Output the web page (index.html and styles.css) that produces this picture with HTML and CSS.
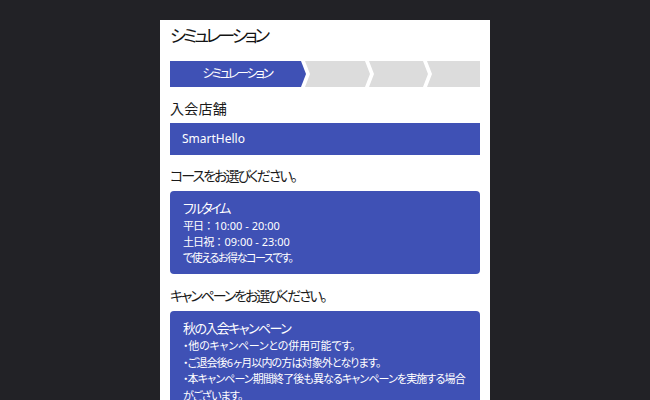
FILE: index.html
```html
<!DOCTYPE html>
<html lang="ja">
<head>
<meta charset="utf-8">
<title>シミュレーション</title>
<link rel="stylesheet" href="styles.css">
</head>
<body>
<main class="panel">
  <h1 class="title">シミュレーション</h1>
  <ol class="steps">
    <li class="step step-first">シミュレーション</li>
    <li class="step step-2"></li>
    <li class="step step-3"></li>
    <li class="step step-last"></li>
  </ol>

  <h2 class="label label-store">入会店舗</h2>
  <div class="store">SmartHello</div>

  <h2 class="label">コースをお選びください。</h2>
  <div class="card">
    <div class="card-title card-title-kana">フルタイム</div>
    <div class="card-line">平日<span class="sep">：</span><span class="time">10:00 - 20:00</span></div>
    <div class="card-line">土日祝<span class="sep">：</span><span class="time">09:00 - 23:00</span></div>
    <div class="card-line card-line-tight">で使えるお得なコースです。</div>
  </div>

  <h2 class="label label-wide">キャンペーンをお選びください。</h2>
  <div class="card card-campaign">
    <div class="card-title">秋の入会キャンペーン</div>
    <div class="card-line card-line-loose">・他のキャンペーンとの併用可能です。</div>
    <div class="card-line">・ご退会後<span class="time">6</span>ヶ月以内の方は対象外となります。</div>
    <div class="card-line">・本キャンペーン期間終了後も異なるキャンペーンを実施する場合がございます。</div>
  </div>
</main>
</body>
</html>
```

FILE: styles.css
```css
html, body {
  margin: 0;
  padding: 0;
  height: 100%;
}

body {
  background: #222226;
  font-family: "Noto Sans", "Noto Sans CJK JP", sans-serif;
  font-feature-settings: "palt";
  color: #1e1e1e;
  overflow: hidden;
}

.panel {
  width: 330px;
  min-height: 380px;
  margin: 20px auto 0;
  background: #ffffff;
  padding: 2px 10px 0;
  box-sizing: border-box;
}

.title {
  margin: 0;
  font-size: 17.5px;
  font-weight: 400;
  line-height: 26px;
  letter-spacing: -0.18em;
  color: #141414;
}

.steps {
  display: flex;
  list-style: none;
  margin: 13px 0 0;
  padding: 0;
  height: 26px;
}

.step {
  background: #dcdcdc;
  height: 26px;
  margin-left: -1px;
  clip-path: polygon(0 0, calc(100% - 5px) 0, 100% 50%, calc(100% - 5px) 100%, 0 100%, 5px 50%);
}

.step-first {
  margin-left: 0;
  width: 136px;
  background: #3f51b5;
  color: #ffffff;
  font-size: 12.5px;
  line-height: 26px;
  letter-spacing: -0.18em;
  text-align: center;
  padding-right: 2px;
  box-sizing: border-box;
  clip-path: polygon(0 0, calc(100% - 5px) 0, 100% 50%, calc(100% - 5px) 100%, 0 100%);
}

.step-2 {
  width: 65px;
}

.step-3 {
  width: 59px;
}

.step-last {
  flex: 1;
  clip-path: polygon(0 0, 100% 0, 100% 100%, 0 100%, 5px 50%);
}

.label {
  margin: 11px 0 0;
  font-size: 14px;
  font-weight: 400;
  line-height: 20px;
  letter-spacing: -0.14em;
  color: #1a1a1a;
}

.label-wide {
  letter-spacing: -0.15em;
}

.label-store {
  margin-top: 12px;
  letter-spacing: 0.02em;
}

.store {
  margin-top: 4px;
  height: 32px;
  line-height: 32px;
  background: #3f51b5;
  color: #ffffff;
  font-size: 12px;
  padding-left: 12px;
}

.card {
  margin-top: 5px;
  background: #3f51b5;
  color: #ffffff;
  border-radius: 4px;
  padding: 7px 12px 8px 13px;
}

.card + .label {
  margin-top: 12px;
}

.card-title {
  font-size: 13px;
  line-height: 20px;
  letter-spacing: -0.12em;
}

.card-title-kana {
  letter-spacing: -0.18em;
}

.card-line {
  font-size: 11px;
  line-height: 16px;
  letter-spacing: -0.08em;
}

.card-line-tight {
  letter-spacing: -0.13em;
}

.card-line-loose {
  letter-spacing: -0.02em;
}

.card-campaign .card-line {
  line-height: 16.6px;
}

.sep {
  font-feature-settings: normal;
  letter-spacing: 0;
}

.time {
  letter-spacing: 0;
}
```
